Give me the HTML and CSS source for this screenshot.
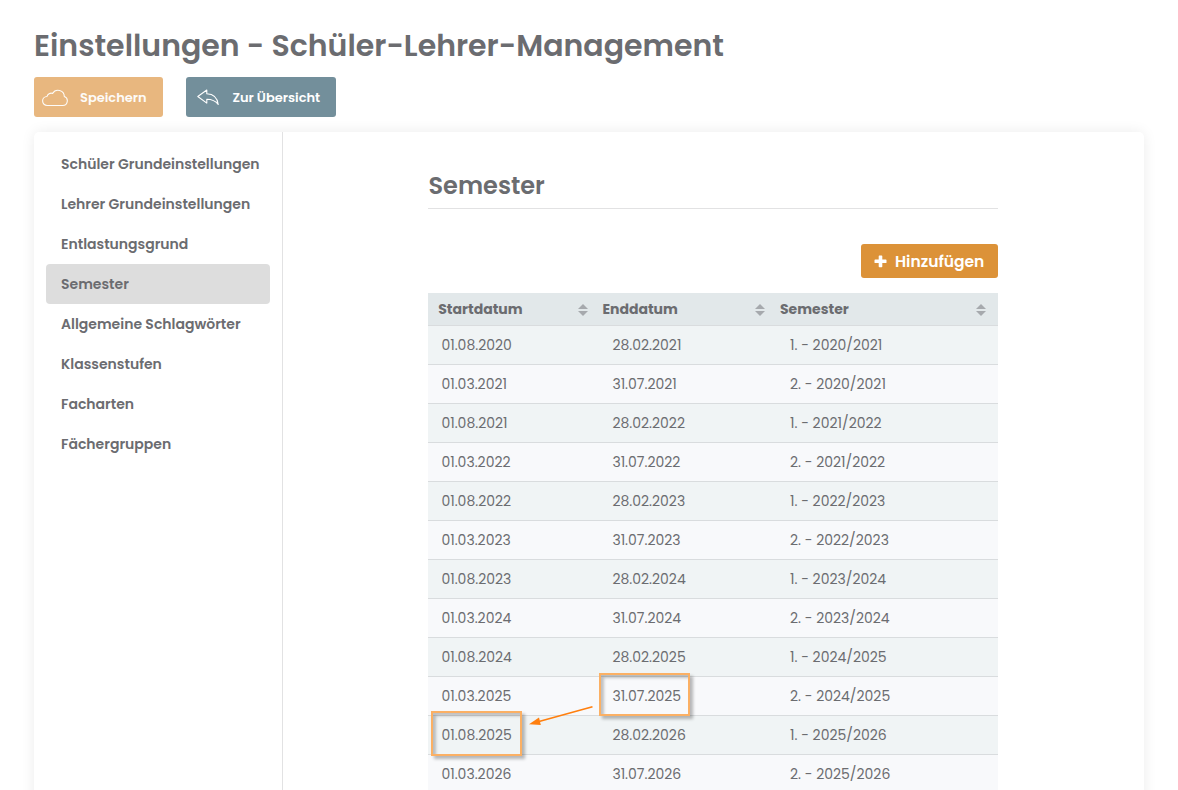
FILE: index.html
```html
<!DOCTYPE html>
<html lang="de">
<head>
<meta charset="utf-8">
<title>Einstellungen - Schüler-Lehrer-Management</title>
<link rel="stylesheet" href="styles.css">
</head>
<body>
<main class="page">
  <h1 class="title">Einstellungen - Schüler-Lehrer-Management</h1>
  <div class="toolbar">
    <button class="btn btn-save">
      <svg class="icon-cloud" width="28" height="18" viewBox="0 0 28 18"><path d="M6.200 16.500H21.500a4.600 4.600 0 0 0 1.800-8.900A6.300 6.300 0 0 0 11.600 4.400A4.300 4.300 0 0 0 6 7.500A4.500 4.500 0 0 0 6.200 16.500Z"/></svg>
      <span>Speichern</span>
    </button>
    <button class="btn btn-back">
      <svg class="icon-reply" width="22" height="17" viewBox="0 0 22 17"><path d="M.8 7.500 9.800 1v3.800c6 .2 10.500 3.500 11.400 10.700-2.900-4-6.400-5.300-11.400-5.300v3.900Z"/></svg>
      <span>Zur Übersicht</span>
    </button>
  </div>
  <div class="card">
    <nav class="side">
      <a class="side-item">Schüler Grundeinstellungen</a>
      <a class="side-item">Lehrer Grundeinstellungen</a>
      <a class="side-item">Entlastungsgrund</a>
      <a class="side-item active">Semester</a>
      <a class="side-item">Allgemeine Schlagwörter</a>
      <a class="side-item">Klassenstufen</a>
      <a class="side-item">Facharten</a>
      <a class="side-item">Fächergruppen</a>
    </nav>
    <section class="content">
      <h2 class="heading">Semester</h2>
      <div class="actions">
        <button class="btn-add"><svg width="13" height="13" viewBox="0 0 13 13"><path d="M4.700 1.200a.7.700 0 0 1 .7-.7h2.200a.7.700 0 0 1 .7.700v3.300h3.500a.7.700 0 0 1 .7.700v2.200a.7.700 0 0 1-.7.700H8.300v3.400a.7.700 0 0 1-.7.700H5.400a.7.700 0 0 1-.7-.7V8.100H1.200a.7.700 0 0 1-.7-.7V5.200a.7.700 0 0 1 .7-.7h3.500Z"/></svg><span>Hinzufügen</span></button>
      </div>
      <div class="table">
        <div class="row head">
          <div><span>Startdatum</span><i class="sort"></i></div><div><span>Enddatum</span><i class="sort"></i></div><div><span>Semester</span><i class="sort"></i></div>
        </div>
        <div class="row"><div>01.08.2020</div><div>28.02.2021</div><div>1. - 2020/2021</div></div>
        <div class="row"><div>01.03.2021</div><div>31.07.2021</div><div>2. - 2020/2021</div></div>
        <div class="row"><div>01.08.2021</div><div>28.02.2022</div><div>1. - 2021/2022</div></div>
        <div class="row"><div>01.03.2022</div><div>31.07.2022</div><div>2. - 2021/2022</div></div>
        <div class="row"><div>01.08.2022</div><div>28.02.2023</div><div>1. - 2022/2023</div></div>
        <div class="row"><div>01.03.2023</div><div>31.07.2023</div><div>2. - 2022/2023</div></div>
        <div class="row"><div>01.08.2023</div><div>28.02.2024</div><div>1. - 2023/2024</div></div>
        <div class="row"><div>01.03.2024</div><div>31.07.2024</div><div>2. - 2023/2024</div></div>
        <div class="row"><div>01.08.2024</div><div>28.02.2025</div><div>1. - 2024/2025</div></div>
        <div class="row"><div>01.03.2025</div><div>31.07.2025</div><div>2. - 2024/2025</div></div>
        <div class="row"><div>01.08.2025</div><div>28.02.2026</div><div>1. - 2025/2026</div></div>
        <div class="row"><div>01.03.2026</div><div>31.07.2026</div><div>2. - 2025/2026</div></div>
        <div class="mark mark-end"></div>
        <div class="mark mark-start"></div>
        <svg class="arrow" width="66" height="24" viewBox="0 0 66 24"><path class="shaft" d="M64.500 3.800 11 18.500"/><path class="tip" d="M1 21.300 11 14.500 12.800 22Z"/></svg>
      </div>
    </section>
  </div>
</main>
</body>
</html>
```
FILE: styles.css
```css
* { box-sizing: border-box; }
body {
  margin: 0;
  height: 790px;
  overflow: hidden;
  background: #fff;
  color: #6b6c70;
  font-family: Poppins, Inter, "Open Sans", sans-serif;
}
button { border: 0; margin: 0; font-family: inherit; color: #fff; }
.page { height: 790px; overflow: hidden; padding: 26px 34px 0; }
.title { margin: 0; font-size: 30px; line-height: 40px; font-weight: 600; white-space: nowrap; }
.toolbar { display: flex; gap: 23px; margin-top: 11px; }
.btn { display: flex; align-items: center; height: 40px; border-radius: 3px; font-size: 13px; font-weight: 600; white-space: nowrap; }
.btn span { margin-top: 1px; }
.btn svg { fill: none; stroke: #fff; stroke-width: 1.100; stroke-linejoin: round; flex: none; }
.btn-save { width: 129px; padding: 0 0 0 7px; gap: 11px; background: #e8b77f; }
.btn-save span { opacity: 0.95; }
.icon-cloud { opacity: 0.95; margin-top: 2px; }
.btn-back { width: 150px; padding: 0 0 0 11px; gap: 13.400px; background: #738f9b; }
.btn-back svg { margin-top: 1px; }
.card { display: flex; width: 1110px; height: 720px; margin-top: 15px; border-radius: 5px; background: #fff; box-shadow: 0 0 14px rgba(0, 0, 0, 0.08); }
.side { width: 249px; flex: none; padding: 12px; border-right: 1px solid #e2e2e3; }
.side-item { display: block; height: 40px; padding-left: 15px; border-radius: 4px; line-height: 40px; font-size: 14px; font-weight: 600; white-space: nowrap; }
.active { background: #ddd; }
.content { width: 570px; margin-left: 145px; padding-top: 37px; }
.heading { margin: 0; height: 40px; padding-left: 0.500px; border-bottom: 1px solid #e2e2e3; font-size: 24px; line-height: 34px; font-weight: 600; }
.actions { display: flex; justify-content: flex-end; padding: 35px 0 15px; }
.btn-add { display: flex; align-items: center; gap: 8px; width: 137px; height: 34px; padding: 0 0 0 13px; border-radius: 3px; background: #dc9238; font-size: 15.500px; font-weight: 600; }
.btn-add svg { fill: #fff; flex: none; }
.table { position: relative; }
.row { display: grid; grid-template-columns: 164.400px 177.600px 228px; height: 39px; border-bottom: 1px solid #d9dcde; background: #f8f9fb; line-height: 39px; font-size: 14px; }
.row:nth-child(even) { background: #f0f4f5; }
.row > div { padding-left: 20px; white-space: nowrap; }
.row > div:first-child { padding-left: 13.400px; }
.row.head { height: 33px; background: #e2e8ea; line-height: 32px; font-weight: 700; }
.row.head > div { display: flex; justify-content: space-between; align-items: center; padding: 0 5px 0 10px; }
.row.head > div:first-child { padding: 0 4.600px 0 10.200px; }
.row.head > div:last-child { padding-right: 12px; }
.sort { display: flex; flex-direction: column; gap: 2px; width: 10px; margin-top: 1px; }
.sort::before, .sort::after { content: ""; border: 5px solid transparent; border-width: 0 5px 5px; border-bottom-color: #a6a9ad; }
.sort::after { border-width: 5px 5px 0; border-top-color: #a6a9ad; }
.mark { position: absolute; border: 2px solid #fbb064; box-shadow: 3px 3px 3px rgba(0, 0, 0, 0.27), inset 3px 3px 3px rgba(0, 0, 0, 0.23); }
.mark-end { left: 171px; top: 380px; width: 91px; height: 43px; }
.mark-start { left: 3px; top: 418px; width: 91px; height: 45px; }
.arrow { position: absolute; left: 100px; top: 410px; }
.shaft { fill: none; stroke: #ff7f0e; stroke-width: 1.700; }
.tip { fill: #ff7f0e; }
```
